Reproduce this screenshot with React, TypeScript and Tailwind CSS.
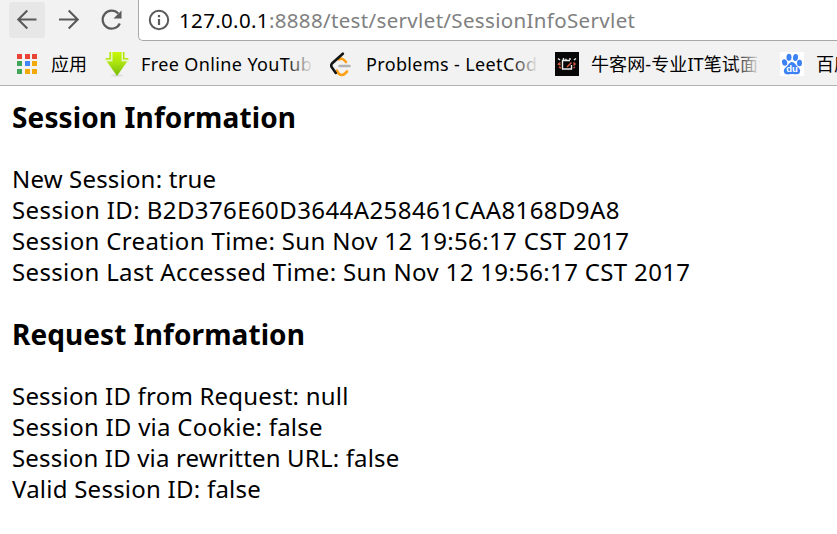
import React from "react";

const latin = "font-['Noto_Sans','Noto_Sans_CJK_SC',sans-serif]";

const Back = () => (
  <svg width="24" height="24" viewBox="0 0 24 24" fill="none" stroke="#5a5a5a" strokeWidth="2.1">
    <path d="M21.500 11.500H3.200M12.300 2.500L3.300 11.500l9 9" />
  </svg>
);

const Forward = () => (
  <svg width="24" height="24" viewBox="0 0 24 24" fill="none" stroke="#5a5a5a" strokeWidth="2.1">
    <path d="M2 11.500h18.500M11.700 2.500l9 9l-9 9" />
  </svg>
);

const Reload = () => (
  <svg width="24" height="24" viewBox="0 0 24 24" fill="none">
    <path d="M19.800 15.500A9 9 0 1 1 18.200 5.500" stroke="#5a5a5a" strokeWidth="2.200" />
    <path d="M21.500 2.500v8h-8z" fill="#5a5a5a" />
  </svg>
);

const Info = () => (
  <svg width="22" height="22" viewBox="0 0 22 22" fill="none" stroke="#5a5a5a" strokeWidth="2">
    <circle cx="11" cy="11" r="9.200" />
    <path d="M11 10v6M11 6v2.200" strokeWidth="2.200" />
  </svg>
);

const appColors = [
  "bg-[#ea4335]", "bg-[#ea4335]", "bg-[#ea4335]",
  "bg-[#3fa757]", "bg-[#4285f4]", "bg-[#f4a90b]",
  "bg-[#3fa757]", "bg-[#f4a90b]", "bg-[#f4a90b]",
];

const Apps = () => (
  <div className="grid w-5 shrink-0 grid-cols-3 gap-[2.5px]">
    {appColors.map((c, i) => (
      <span key={i} className={`size-[5px] ${c}`} />
    ))}
  </div>
);

const Download = () => (
  <svg width="24" height="26" viewBox="0 0 24 26">
    <defs>
      <linearGradient id="lime" x1="0" y1="0" x2="0" y2="1">
        <stop offset="0" stopColor="#c8f800" />
        <stop offset="0.5" stopColor="#a6e010" />
        <stop offset="1" stopColor="#78b80c" />
      </linearGradient>
    </defs>
    <ellipse cx="12" cy="24.500" rx="6" ry="1.200" fill="#dcdcdc" />
    <path d="M4 1h16v6h4v2.500L12 25L0 9.500V7h4z" fill="#e6f4c4" />
    <path d="M7.500 1h9v9.500h5.500L12 25L2 10.500h5.500z" fill="url(#lime)" />
    <path d="M4.500 1H6v7.500H0.800V7h3.700zM18 1h1.500v6h3.700v1.500H18z" fill="#b6e610" />
  </svg>
);

const Leet = () => (
  <svg width="24" height="26" viewBox="0 0 24 26" fill="none" strokeLinecap="round" strokeWidth="2.600">
    <path d="M9 8.500Q12 6 16 11M7 19.500l1.500 3q3.500 3 6.500 0l2-2" stroke="#ffa116" />
    <path d="M9.500 15h10" stroke="#b3b3b3" />
    <path d="M12.800 2.700L2 12.500q-1.600 2 0 4l3.800 5.500" stroke="#161616" />
  </svg>
);

const Nowcoder = () => (
  <svg width="24" height="24" viewBox="0 0 24 24" fill="none">
    <path d="M0 0h24v24H0z" fill="#070707" />
    <path d="M15 8.500H7.500v8.500h9V13M8.500 8V6M11 8V6.800M15 8V6M3 6.500l2 1.500M21 6.500l-2 1.500" stroke="#eee" strokeWidth="1.400" />
    <path d="M5.500 10.500L3.500 12l2 1M4 15l2 1M12 15l4.500-4.500M18.500 10.500l1.500 1.500-1.500 1.500M20 15l-1.500 1" stroke="#d65b3e" strokeWidth="1.500" />
  </svg>
);

const Baidu = () => (
  <svg width="24" height="24" viewBox="0 0 24 24">
    <path d="M0 0h24v24H0z" fill="#fff" />
    <g fill="#3d82f5">
      <ellipse cx="4.600" cy="10.500" rx="2.600" ry="3.200" transform="rotate(-12 4.600 10.500)" />
      <ellipse cx="9" cy="5.300" rx="2.500" ry="3.500" />
      <ellipse cx="15.500" cy="5.500" rx="2.500" ry="3.500" transform="rotate(10 15.500 5.500)" />
      <ellipse cx="19.500" cy="11" rx="2.500" ry="3.200" />
      <path d="M12 10c2.500 0 3.300 2.300 5 4.200c2 1.800 4 3.300 2.800 6.200c-1.300 3-4.800 1.600-7.800 1.600s-6.500 1.500-7.800-1.500c-1.200-3 1-4.700 2.800-6.300C8.800 12.500 9.500 10 12 10z" />
    </g>
    <text x="6.300" y="20.300" fontSize="9.500" fontWeight="700" fontFamily="Liberation Sans, sans-serif" fill="#fff">du</text>
  </svg>
);

const Fade = () => (
  <span className="absolute inset-y-0 right-0 w-7 bg-gradient-to-r from-[#f2f2f2]/0 to-[#f2f2f2]" />
);

const Line = ({ className, children }: { className: string; children: string }) => (
  <p className="h-[31px]"><span className={className}>{children}</span></p>
);

export default function App() {
  return (
    <div className={`h-[534px] w-[837px] overflow-hidden bg-white text-black ${latin}`}>
      <header className="h-[86px] border-b border-[#b3b3b3] bg-[#f2f2f2]">
        <div className="flex h-[41px] items-start">
          <div className="ml-[9px] mt-[2px] flex size-9 items-center justify-center rounded-[3px] bg-[#e7e7e7]"><Back /></div>
          <div className="ml-3 mt-2"><Forward /></div>
          <div className="ml-[19px] mt-2"><Reload /></div>
          <div className="-mt-1 ml-[14px] flex h-[45px] flex-1 items-center rounded-bl-[5px] border border-r-0 border-[#a8a8a8] bg-white pl-[9px] pt-[2px]">
            <Info />
            <span className="ml-[9px] whitespace-nowrap text-[20.5px] leading-6 tracking-[0.34px] text-[#808080]">
              <span className="text-black">127.0.0.1</span>:8888/test/servlet/SessionInfoServlet
            </span>
          </div>
        </div>
        <nav className="flex h-[45px] items-center whitespace-nowrap pl-[17px] text-[18px] leading-6 *:shrink-0">
          <Apps />
          <span className="ml-[14px] w-[38px]">应用</span>
          <span className="ml-4 w-6"><Download /></span>
          <span className="relative ml-3 w-[172px] tracking-[0.38px]">Free Online YouTub<Fade /></span>
          <span className="ml-[17px] w-6"><Leet /></span>
          <span className="relative ml-3 w-[172px] tracking-[0.36px]">Problems - LeetCod<Fade /></span>
          <span className="ml-[17px] w-6"><Nowcoder /></span>
          <span className="relative ml-3 w-[170px] overflow-hidden tracking-[0.1px]">牛客网-专业IT笔试面试<Fade /></span>
          <span className="ml-[19px] w-6"><Baidu /></span>
          <span className="ml-3">百度</span>
        </nav>
      </header>
      <main className="whitespace-nowrap pl-3 text-[24px] leading-[31px]">
        <h3 className="mt-[13px] h-[37px] text-[28px] font-bold leading-[37px] tracking-[0.12px]">Session Information</h3>
        <section className="mt-[27px]">
          <Line className="tracking-[0.18px]">New Session: true</Line>
          <Line className="tracking-[0.41px]">Session ID: B2D376E60D3644A258461CAA8168D9A8</Line>
          <Line className="tracking-[0.35px]">Session Creation Time: Sun Nov 12 19:56:17 CST 2017</Line>
          <Line className="tracking-[0.34px]">Session Last Accessed Time: Sun Nov 12 19:56:17 CST 2017</Line>
        </section>
        <h3 className="mt-[29px] h-[37px] text-[28px] font-bold leading-[37px] tracking-[0.08px]">Request Information</h3>
        <section className="mt-[27px]">
          <Line className="tracking-[0.2px]">Session ID from Request: null</Line>
          <Line className="tracking-[0.25px]">Session ID via Cookie: false</Line>
          <Line className="tracking-[0.17px]">Session ID via rewritten URL: false</Line>
          <Line className="tracking-[0.24px]">Valid Session ID: false</Line>
        </section>
      </main>
    </div>
  );
}
